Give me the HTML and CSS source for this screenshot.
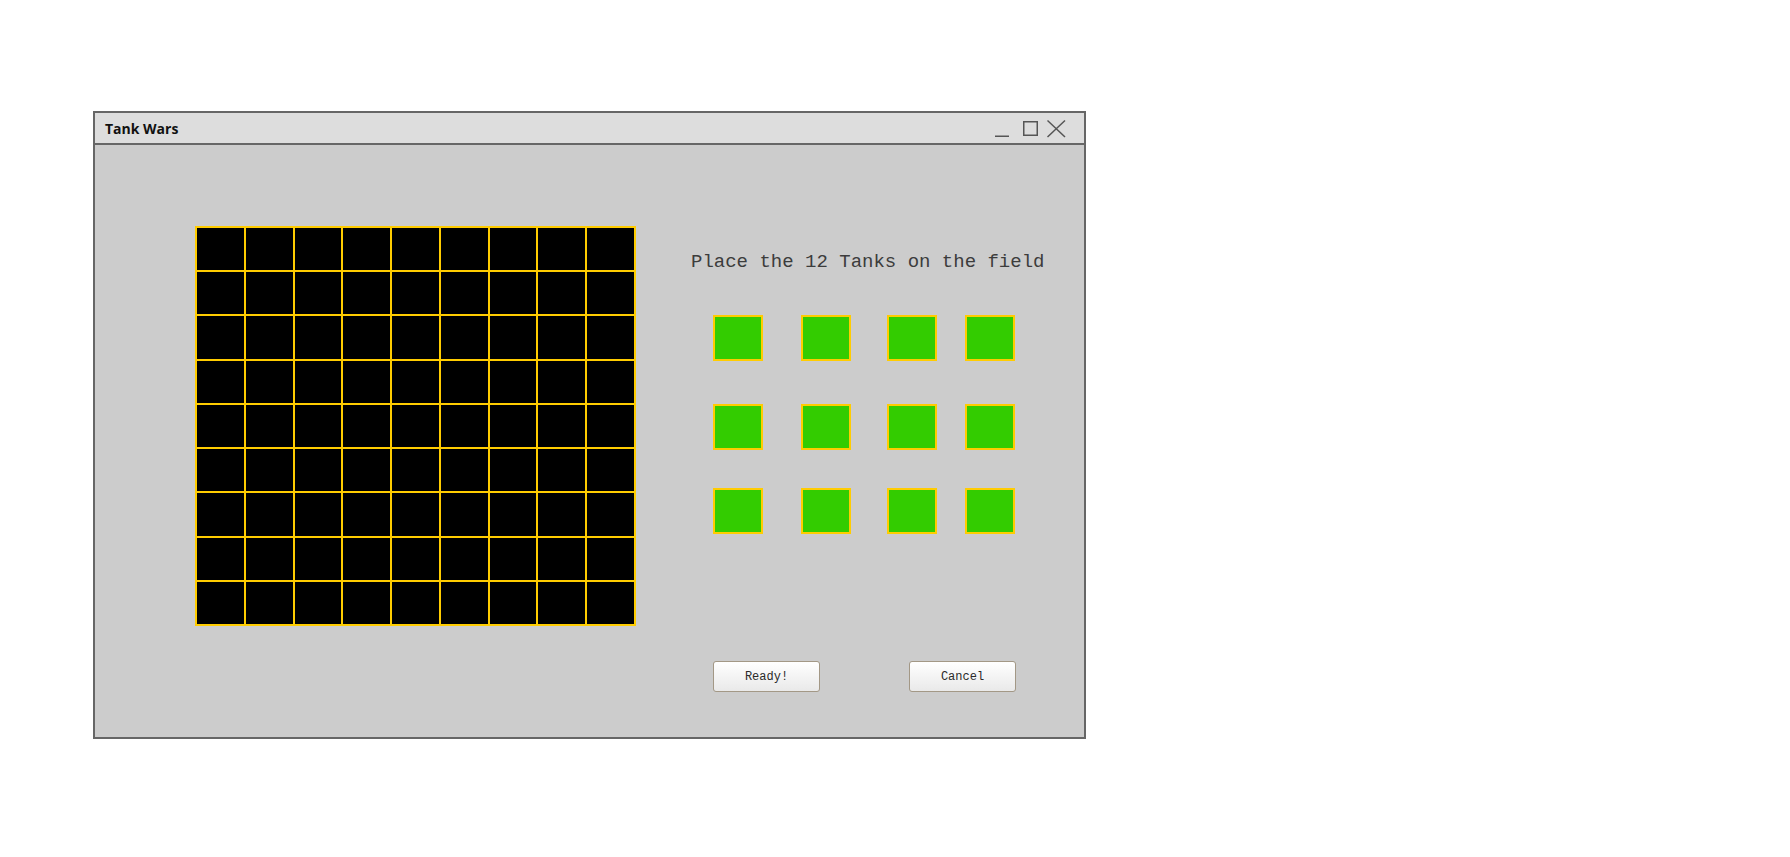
FILE: index.html
```html
<!DOCTYPE html>
<html>
<head>
<meta charset="utf-8">
<title>Tank Wars</title>
<link rel="stylesheet" href="styles.css">
</head>
<body>
<div class="page">
  <div class="window">
    <div class="titlebar">
      <span class="title">Tank Wars</span>
      <svg class="controls" width="72" height="30" viewBox="0 0 72 30">
        <line x1="0" y1="23.25" x2="14" y2="23.25" stroke="#555" stroke-width="1.5"/>
        <rect x="28.75" y="8.75" width="13.5" height="13.5" fill="none" stroke="#555" stroke-width="1.5"/>
        <line x1="52.5" y1="7.5" x2="70" y2="24" stroke="#555" stroke-width="1.5"/>
        <line x1="70" y1="7.5" x2="52.5" y2="24" stroke="#555" stroke-width="1.5"/>
      </svg>
    </div>
    <div class="content">
      <div class="board">
        <div class="cell"></div><div class="cell"></div><div class="cell"></div><div class="cell"></div><div class="cell"></div><div class="cell"></div><div class="cell"></div><div class="cell"></div><div class="cell"></div>
        <div class="cell"></div><div class="cell"></div><div class="cell"></div><div class="cell"></div><div class="cell"></div><div class="cell"></div><div class="cell"></div><div class="cell"></div><div class="cell"></div>
        <div class="cell"></div><div class="cell"></div><div class="cell"></div><div class="cell"></div><div class="cell"></div><div class="cell"></div><div class="cell"></div><div class="cell"></div><div class="cell"></div>
        <div class="cell"></div><div class="cell"></div><div class="cell"></div><div class="cell"></div><div class="cell"></div><div class="cell"></div><div class="cell"></div><div class="cell"></div><div class="cell"></div>
        <div class="cell"></div><div class="cell"></div><div class="cell"></div><div class="cell"></div><div class="cell"></div><div class="cell"></div><div class="cell"></div><div class="cell"></div><div class="cell"></div>
        <div class="cell"></div><div class="cell"></div><div class="cell"></div><div class="cell"></div><div class="cell"></div><div class="cell"></div><div class="cell"></div><div class="cell"></div><div class="cell"></div>
        <div class="cell"></div><div class="cell"></div><div class="cell"></div><div class="cell"></div><div class="cell"></div><div class="cell"></div><div class="cell"></div><div class="cell"></div><div class="cell"></div>
        <div class="cell"></div><div class="cell"></div><div class="cell"></div><div class="cell"></div><div class="cell"></div><div class="cell"></div><div class="cell"></div><div class="cell"></div><div class="cell"></div>
        <div class="cell"></div><div class="cell"></div><div class="cell"></div><div class="cell"></div><div class="cell"></div><div class="cell"></div><div class="cell"></div><div class="cell"></div><div class="cell"></div>
      </div>
      <div class="side">
        <div class="prompt">Place the 12 Tanks on the field</div>
        <div class="tanks">
          <div class="tank"></div><div class="tank"></div><div class="tank"></div><div class="tank"></div>
          <div class="tank"></div><div class="tank"></div><div class="tank"></div><div class="tank"></div>
          <div class="tank"></div><div class="tank"></div><div class="tank"></div><div class="tank"></div>
        </div>
        <div class="buttons">
          <button class="btn">Ready!</button>
          <button class="btn">Cancel</button>
        </div>
      </div>
    </div>
  </div>
</div>
</body>
</html>
```

FILE: styles.css
```css
html, body {
  margin: 0;
  padding: 0;
  background: #ffffff;
}

.page {
  padding: 111px 0 0 93px;
}

.window {
  box-sizing: border-box;
  width: 993px;
  height: 628px;
  border: 2px solid #666666;
  background: #cccccc;
  display: flex;
  flex-direction: column;
}

.titlebar {
  height: 30px;
  flex: none;
  background: #dddddd;
  border-bottom: 2px solid #666666;
  display: flex;
  align-items: center;
  padding: 0 17px 0 10px;
}

.title {
  font-family: "Open Sans", "Liberation Sans", sans-serif;
  font-weight: 700;
  font-size: 14px;
  color: #111111;
  margin-top: 1px;
}

.controls {
  margin-left: auto;
  display: block;
}

.content {
  display: flex;
  padding: 81px 0 0 100px;
}

.board {
  width: 441px;
  height: 400px;
  box-sizing: border-box;
  background: #ffcc00;
  padding: 2px;
  display: grid;
  grid-template-columns: repeat(9, 1fr);
  grid-template-rows: repeat(9, 1fr);
  gap: 2px;
  flex: none;
}

.cell {
  background: #000000;
}

.side {
  margin-left: 55px;
  display: flex;
  flex-direction: column;
}

.prompt {
  margin-top: 25px;
  font-family: "Liberation Mono", "Courier New", monospace;
  font-size: 19px;
  line-height: 22px;
  color: #3c3c3c;
  white-space: nowrap;
}

.tanks {
  margin: 42px 0 0 22px;
  display: grid;
  grid-template-columns: 88px 86px 78px 50px;
  grid-template-rows: 89px 84px 46px;
  align-items: start;
}

.tank {
  box-sizing: border-box;
  width: 50px;
  height: 46px;
  background: #33cc00;
  border: 2px solid #ffcc00;
}

.buttons {
  margin: 127px 0 0 22px;
  display: flex;
  gap: 89px;
}

.btn {
  box-sizing: border-box;
  width: 107px;
  height: 31px;
  margin: 0;
  padding: 0;
  border: 1px solid #a39886;
  border-radius: 3px;
  background: linear-gradient(#ffffff, #e9e9e9);
  font-family: "Liberation Mono", "Courier New", monospace;
  font-size: 12px;
  color: #2a2a2a;
}
```
